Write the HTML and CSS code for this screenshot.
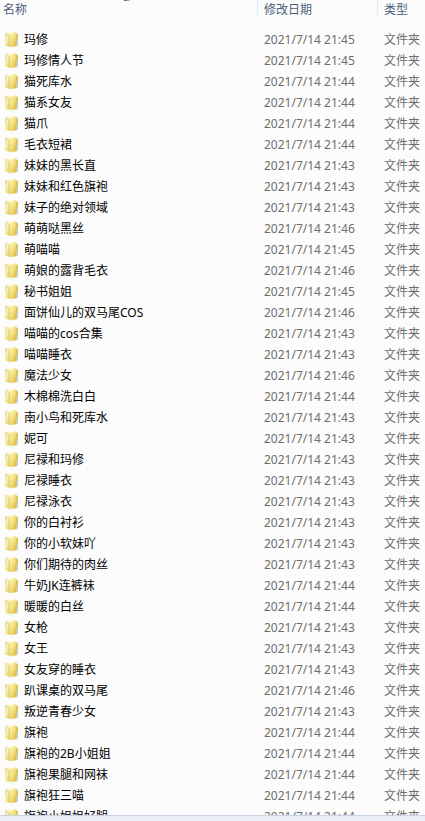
FILE: index.html
```html
<!DOCTYPE html>
<html lang="zh-CN">
  <head>
    <meta charset="utf-8">
    <meta name="viewport" content="width=device-width, initial-scale=1">
    <title>文件夹</title>
    <link rel="stylesheet" href="styles.css">
  </head>
  <body>
    <svg class="defs" aria-hidden="true">
      <defs>
        <linearGradient id="back" x1="0" y1="0" x2="1" y2="1">
          <stop offset="0" stop-color="#e6d488"/>
          <stop offset="0.4" stop-color="#f8efb4"/>
          <stop offset="1" stop-color="#e2c95c"/>
        </linearGradient>
        <linearGradient id="front" x1="0" y1="0" x2="1" y2="1">
          <stop offset="0" stop-color="#fdf8c6"/>
          <stop offset="0.5" stop-color="#f3e282"/>
          <stop offset="1" stop-color="#d9b432"/>
        </linearGradient>
      </defs>
      <symbol id="folder" viewBox="0 0 14 17">
        <path d="M8 2 L12 2.5 Q13 3 13 4 V13.5 L11 15.5 H8 Z" fill="#dcc25c"/>
        <path d="M11.5 8 L13 9 V14 L11.5 15.5 Z" fill="#c2cfbe"/>
        <path d="M0 3 Q0 2 1 2 L4 1.5 L5 3 V15.5 L1 15 Q0 15 0 14 Z" fill="url(#back)"/>
        <path d="M4 4 Q4 3 5 2.7 L10 1 Q11 1 11 2 V13 Q11 14 10 14.5 L5.5 16.5 Q4 16.5 4 15.5 Z" fill="url(#front)"/>
        <path d="M4.3 4 V15.5" stroke="#d0b550" stroke-width="0.6"/>
      </symbol>
    </svg>

    <main class="list">
      <span class="sort"></span>
      <table class="files">
        <colgroup>
          <col>
          <col class="col-date">
          <col class="col-type">
        </colgroup>
        <thead>
          <tr>
            <th class="name">名称</th>
            <th>修改日期</th>
            <th>类型</th>
          </tr>
        </thead>
        <tbody class="js-rows"></tbody>
      </table>
    </main>
    <footer class="bar"></footer>

    <script src="script.js"></script>
  </body>
</html>
```

FILE: styles.css
```css
body{
  margin: 0;
  height: 100vh;
  display: flex;
  flex-direction: column;
  background-color: #fcfcfc;
  font-family: "Noto Sans", "Noto Sans CJK SC", sans-serif;
  font-size: 12px;
}
.defs{
  position: absolute;
  width: 0;
  height: 0;
}
.list{
  position: relative;
  flex: 1;
  min-height: 0;
  overflow: hidden;
}
/* sort arrow, cut off by the top edge */
.sort{
  position: absolute;
  top: 0;
  left: 124px;
  width: 6px;
  height: 1px;
  background: linear-gradient(to right, #555, #ccc);
}
.files{
  width: 100%;
  table-layout: fixed;
  border-collapse: collapse;
}
.col-date{
  width: 120px;
}
.col-type{
  width: 48px;
}
.files th{
  padding: 0 0 9px 7px;
  line-height: 20px;
  font-weight: normal;
  text-align: left;
  color: #4c607a;
  background: linear-gradient(#d5e6f5, #e2ecf6) no-repeat left top / 1px 15px;
}
.files th.name{
  padding-left: 3px;
  background: none;
}
.files td{
  height: 21px;
  padding: 0 0 0 7px;
  line-height: 21px;
  color: #6d6d6d;
  white-space: nowrap;
}
.files td.name{
  padding-left: 5px;
  color: #000;
}
.item{
  display: flex;
  align-items: center;
  gap: 5px;
  height: 21px;
}
.folder{
  width: 14px;
  height: 17px;
}
.bar{
  height: 5px;
  border-top: 1px solid #c9d3e4;
  background: linear-gradient(#e3eaf6, #eef3fb);
}
```

FILE: script.js
```js
const folders = [
  ['玛修', '21:45'],
  ['玛修情人节', '21:45'],
  ['猫死库水', '21:44'],
  ['猫系女友', '21:44'],
  ['猫爪', '21:44'],
  ['毛衣短裙', '21:44'],
  ['妹妹的黑长直', '21:43'],
  ['妹妹和红色旗袍', '21:43'],
  ['妹子的绝对领域', '21:43'],
  ['萌萌哒黑丝', '21:46'],
  ['萌喵喵', '21:45'],
  ['萌娘的露背毛衣', '21:46'],
  ['秘书姐姐', '21:45'],
  ['面饼仙儿的双马尾COS', '21:46'],
  ['喵喵的cos合集', '21:43'],
  ['喵喵睡衣', '21:43'],
  ['魔法少女', '21:46'],
  ['木棉棉洗白白', '21:44'],
  ['南小鸟和死库水', '21:43'],
  ['妮可', '21:43'],
  ['尼禄和玛修', '21:43'],
  ['尼禄睡衣', '21:43'],
  ['尼禄泳衣', '21:43'],
  ['你的白衬衫', '21:43'],
  ['你的小软妹吖', '21:43'],
  ['你们期待的肉丝', '21:43'],
  ['牛奶JK连裤袜', '21:44'],
  ['暖暖的白丝', '21:44'],
  ['女枪', '21:43'],
  ['女王', '21:43'],
  ['女友穿的睡衣', '21:43'],
  ['趴课桌的双马尾', '21:46'],
  ['叛逆青春少女', '21:43'],
  ['旗袍', '21:44'],
  ['旗袍的2B小姐姐', '21:44'],
  ['旗袍果腿和网袜', '21:44'],
  ['旗袍狂三喵', '21:44'],
  ['旗袍小姐姐好腿', '21:44']
];

let rows = '';
folders.forEach(function(folder) {
  rows += `<tr>
    <td class="name"><div class="item"><svg class="folder" aria-hidden="true"><use href="#folder"/></svg><span>${folder[0]}</span></div></td>
    <td>2021/7/14 ${folder[1]}</td>
    <td>文件夹</td>
  </tr>`;
});
document.querySelector('.js-rows').innerHTML = rows;
```
